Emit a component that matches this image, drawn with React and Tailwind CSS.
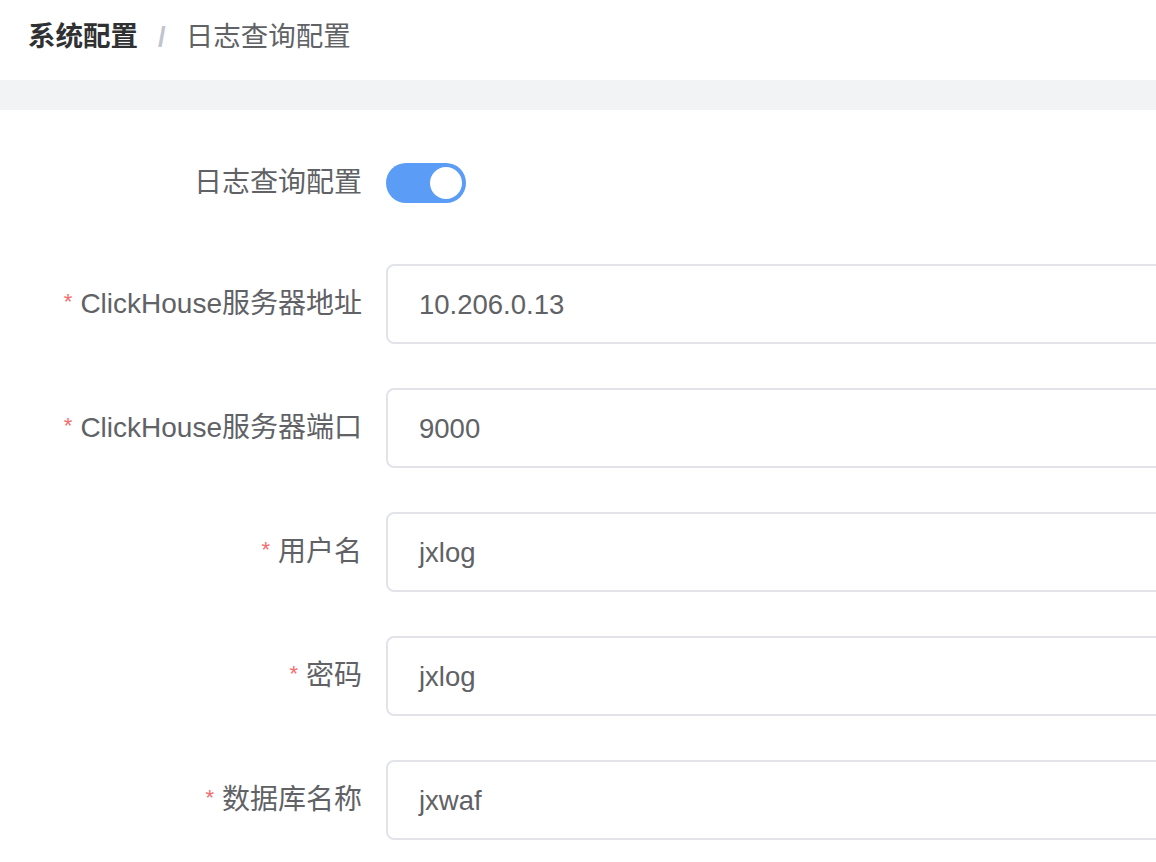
const font = { fontFamily: '"Liberation Sans", "Noto Sans CJK SC", sans-serif' }

const fields = [
  { label: 'ClickHouse服务器地址', value: '10.206.0.13' },
  { label: 'ClickHouse服务器端口', value: '9000' },
  { label: '用户名', value: 'jxlog' },
  { label: '密码', value: 'jxlog' },
  { label: '数据库名称', value: 'jxwaf' },
]

function Label({ children, required }) {
  return (
    <label className="w-[386px] shrink-0 pr-[24px] flex items-center justify-end text-[28px] text-[#606266]">
      {required && <span className="text-[#f56c6c] text-[22px] mr-[8px] -mt-[6px]">*</span>}
      {children}
    </label>
  )
}

export default function App() {
  return (
    <div className="w-[1156px] h-[862px] overflow-hidden bg-white" style={font}>
      <div className="h-[80px] flex items-center pl-[28px] pb-[6px] text-[27.5px]">
        <span className="font-bold text-[#303133]">系统配置</span>
        <span className="mx-[20px] text-[#c0c4cc] font-bold">/</span>
        <span className="text-[#606266]">日志查询配置</span>
      </div>
      <div className="h-[30px] bg-[#f2f3f5]" />
      <div className="pt-[33px]">
        <div className="flex h-[80px] mb-[41px]">
          <Label>日志查询配置</Label>
          <div className="flex items-center">
            <div className="w-[80px] h-[40px] rounded-full bg-[#5b9cf6] flex items-center justify-end pr-[4px]">
              <div className="w-[32px] h-[32px] rounded-full bg-white" />
            </div>
          </div>
        </div>
        {fields.map((f) => (
          <div key={f.label} className="flex h-[80px] mb-[44px]">
            <Label required>{f.label}</Label>
            <div className="flex-1 -mr-[20px] h-[80px] border-2 border-[#e2e4e9] rounded-[8px] flex items-center pl-[31px] pt-[2px] text-[27.5px] text-[#606266]">
              {f.value}
            </div>
          </div>
        ))}
      </div>
    </div>
  )
}
